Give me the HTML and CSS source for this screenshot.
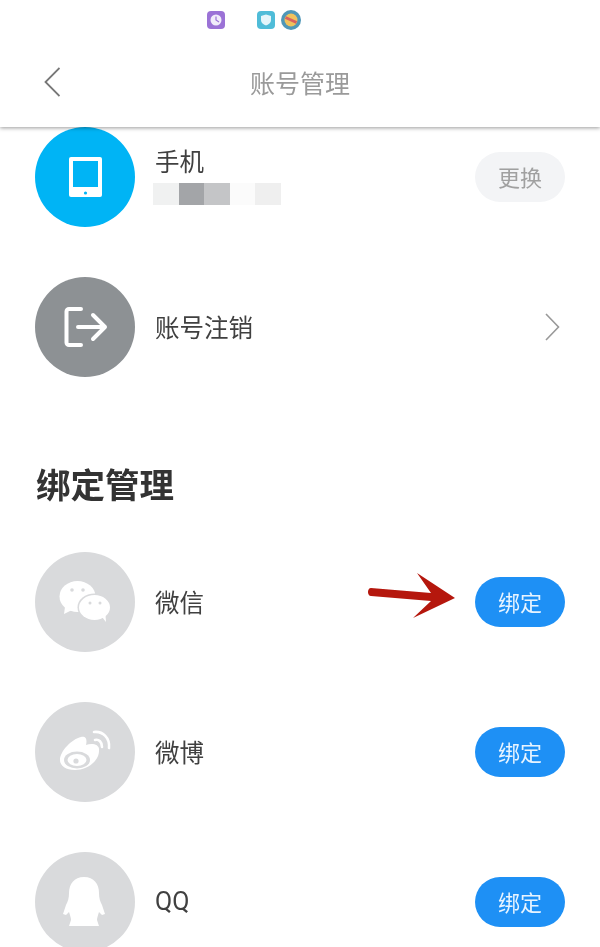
FILE: index.html
```html
<!DOCTYPE html>
<html lang="zh">
<head>
<meta charset="utf-8">
<title>账号管理</title>
<link rel="stylesheet" href="styles.css">
</head>
<body>
<div class="page">
  <header class="header">
    <div class="status">
      <svg class="st st-clock" viewBox="0 0 18 18"><rect width="18" height="18" rx="4" fill="#9b72d6"/><circle cx="9" cy="9" r="5.500" fill="#f1ecfa"/><path d="M9 5.500V9l3 2" stroke="#9b72d6" stroke-width="1.200" fill="none"/></svg>
      <svg class="st st-shield" viewBox="0 0 18 18"><rect width="18" height="18" rx="4" fill="#4fbcd8"/><path d="M9 3.500l5 1.500v4c0 3-2.500 4.500-5 5.500-2.500-1-5-2.500-5-5.500V5z" fill="#e4f5fa"/></svg>
      <svg class="st st-ball" viewBox="0 0 20 20"><circle cx="10" cy="10" r="10" fill="#4f97b8"/><circle cx="10" cy="10" r="6.500" fill="#f0c25c"/><path d="M4.500 7.500l11 5" stroke="#d9605f" stroke-width="3"/></svg>
    </div>
    <nav class="nav">
      <svg class="back" viewBox="0 0 16 30"><path d="M15.500 1L1.500 15l14 14" fill="none" stroke="#777" stroke-width="1.800"/></svg>
      <h1 class="title">账号管理</h1>
    </nav>
  </header>
  <main class="main">
    <section class="list">
      <div class="row">
        <span class="avatar avatar-blue">
          <svg class="icon" viewBox="0 0 100 100"><rect x="34" y="30" width="33" height="40" rx="2" fill="#fff"/><rect x="38" y="34" width="25" height="26" fill="#00b4f5"/><circle cx="50.500" cy="66" r="1.600" fill="#00b4f5"/></svg>
        </span>
        <div class="info">
          <span class="name">手机</span>
          <span class="masked"><i class="px px1"></i><i class="px px2"></i><i class="px px3"></i><i class="px px4"></i><i class="px px5"></i></span>
        </div>
        <button class="btn btn-grey">更换</button>
      </div>
      <div class="row">
        <span class="avatar avatar-dark">
          <svg class="icon" viewBox="0 0 100 100"><g fill="none" stroke="#fff" stroke-width="4" stroke-linecap="round" stroke-linejoin="round"><path d="M46 32H34a2.500 2.500 0 0 0-2.500 2.500v31a2.500 2.500 0 0 0 2.500 2.500h12"/><path d="M43 50h27M58 38l12 12-12 12"/></g></svg>
        </span>
        <span class="name">账号注销</span>
        <svg class="chev" viewBox="0 0 15 28"><path d="M1 1l12.500 13L1 27" fill="none" stroke="#999" stroke-width="1.600"/></svg>
      </div>
    </section>
    <h2 class="heading">绑定管理</h2>
    <section class="list">
      <div class="row">
        <span class="avatar avatar-light">
          <svg class="icon" viewBox="0 0 100 100"><ellipse cx="42.500" cy="44.500" rx="18" ry="15.500" fill="#fff"/><path d="M30 55l-1 7 8-4z" fill="#fff"/><ellipse cx="59.500" cy="55.500" rx="17" ry="14" fill="#d9dadc"/><ellipse cx="59.500" cy="55.500" rx="15.500" ry="12.500" fill="#fff"/><path d="M67 65l4 5-.500-7z" fill="#fff"/><g fill="#d9dadc"><circle cx="37" cy="38" r="1.800"/><circle cx="48" cy="38" r="1.800"/><circle cx="55" cy="51" r="1.500"/><circle cx="65" cy="51" r="1.500"/></g></svg>
        </span>
        <span class="name">微信</span>
        <button class="btn btn-blue">绑定</button>
      </div>
      <div class="row">
        <span class="avatar avatar-light">
          <svg class="icon" viewBox="0 0 100 100"><path d="M25 58c0-9 12-21 21-23 6-1 6 4 5 8 6-2 14-1 13 6 0 3-1 6-4 10-5 6-13 9-20 9-9 0-15-4-15-10z" fill="#fff"/><ellipse cx="42" cy="58" rx="13" ry="8.500" fill="#d9dadc"/><ellipse cx="42" cy="58" rx="9.500" ry="6" fill="#fff"/><circle cx="41" cy="59" r="2.600" fill="#d9dadc"/><g fill="none" stroke="#fff" stroke-width="2.600" stroke-linecap="round"><path d="M59 30c9-1 16 6 15 16"/><path d="M60 38c4-1 7 2 7 7"/></g></svg>
        </span>
        <span class="name">微博</span>
        <button class="btn btn-blue">绑定</button>
      </div>
      <div class="row">
        <span class="avatar avatar-light">
          <svg class="icon" viewBox="0 0 100 100"><path d="M49 25c10 0 15 7 15 16 0 5 1 8 3 12l3 9-3 1-3-3c-1 3-2 6-2 8l2 6H34l2-6c0-2-1-5-2-8l-3 3-3-1 3-9c2-4 3-7 3-12 0-9 5-16 15-16z" fill="#fff"/></svg>
        </span>
        <span class="name name-latin">QQ</span>
        <button class="btn btn-blue">绑定</button>
      </div>
    </section>
  </main>
  <svg class="arrow" viewBox="0 0 90 48"><path d="M4 16L64 21 50 1 88 26 46 46 64 29 4 24C0 24 0 16 4 16z" fill="#b5170d"/></svg>
</div>
</body>
</html>
```

FILE: styles.css
```css
* {
  box-sizing: border-box;
}

html,
body {
  margin: 0;
  padding: 0;
  background: #fff;
}

body {
  font-family: "Noto Sans CJK SC", "Noto Sans", sans-serif;
  color: #3a3a3a;
}

.page {
  position: relative;
  width: 600px;
  height: 947px;
  overflow: hidden;
  filter: blur(0.5px);
}

.header {
  position: relative;
  z-index: 2;
  height: 127px;
  background: #fff;
  box-shadow: 0 1px 4px rgba(0, 0, 0, 0.4);
}

.status {
  height: 40px;
  padding: 10px 0 0 207px;
  display: flex;
  align-items: flex-start;
}

.st {
  display: block;
}

.st-clock,
.st-shield {
  width: 18px;
  height: 18px;
  margin-top: 1px;
}

.st-shield {
  margin-left: 32px;
}

.st-ball {
  width: 20px;
  height: 20px;
  margin-left: 6px;
}

.nav {
  height: 87px;
  padding: 0 44px 3px;
  display: grid;
  grid-template-columns: 1fr auto 1fr;
  align-items: center;
}

.back {
  width: 16px;
  height: 30px;
}

.title {
  margin: 0;
  font-size: 25px;
  font-weight: 400;
  color: #9a9a9a;
  line-height: 30px;
}

.main {
  display: flex;
  flex-direction: column;
}

.list {
  display: flex;
  flex-direction: column;
  gap: 50px;
}

.row {
  height: 100px;
  padding: 0 35px;
  display: flex;
  align-items: center;
  flex: none;
}

.avatar {
  width: 100px;
  height: 100px;
  border-radius: 50%;
  flex: none;
  margin-right: 20px;
}

.avatar-blue {
  background: #00b4f5;
}

.avatar-dark {
  background: #8d9194;
}

.avatar-light {
  background: #d9dadc;
}

.icon {
  display: block;
  width: 100px;
  height: 100px;
}

.info {
  display: flex;
  flex-direction: column;
  gap: 7px;
  padding-bottom: 3px;
}

.name {
  font-size: 24.500px;
  line-height: 30px;
  color: #404040;
}

.name-latin {
  font-family: "Roboto", "Noto Sans", sans-serif;
  font-size: 25px;
}

.masked {
  display: flex;
  height: 22px;
  margin-left: -2px;
}

.px {
  width: 25.600px;
  height: 22px;
  display: block;
}

.px1 {
  background: #f0f1f1;
}

.px2 {
  background: #a3a5a8;
}

.px3 {
  background: #c4c5c7;
}

.px4 {
  background: #fbfbfb;
}

.px5 {
  background: #efefef;
}

.btn {
  margin-left: auto;
  width: 90px;
  height: 50px;
  border: 0;
  border-radius: 25px;
  padding: 0 0 2px;
  font-family: inherit;
  font-size: 22px;
}

.btn-grey {
  background: #f3f4f6;
  color: #a0a0a0;
}

.btn-blue {
  background: #1e90f5;
  color: #e8f4ff;
}

.chev {
  margin-left: auto;
  margin-right: 5px;
  width: 15px;
  height: 28px;
}

.heading {
  margin: 81px 0 44px 36px;
  font-size: 34.500px;
  line-height: 50px;
  font-weight: 700;
  color: #333;
}

.arrow {
  position: absolute;
  left: 367px;
  top: 572px;
  width: 90px;
  height: 48px;
}
```
